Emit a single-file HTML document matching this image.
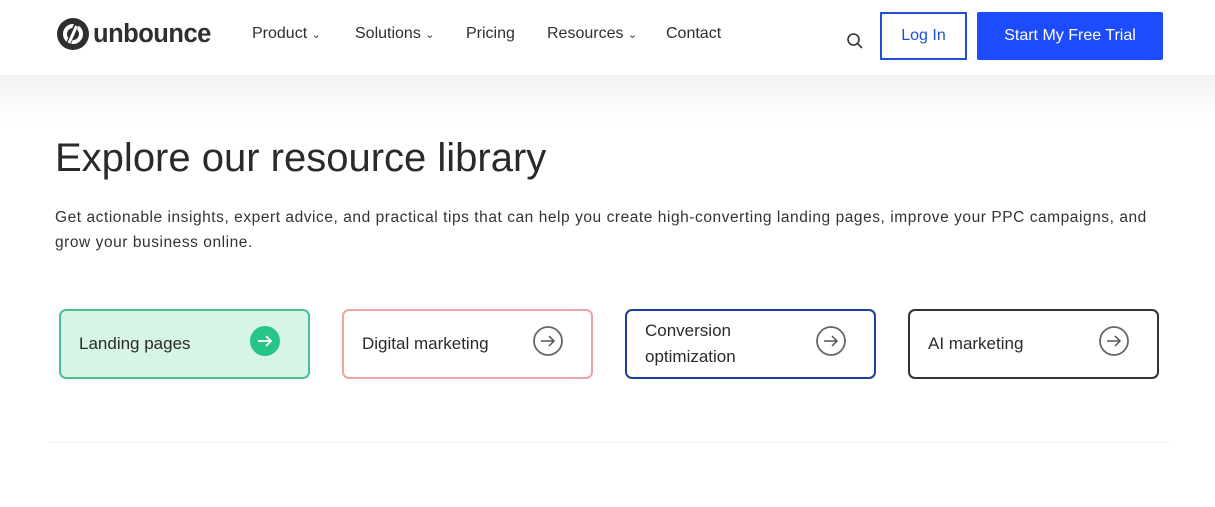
<!DOCTYPE html>
<html><head><style>
*{margin:0;padding:0;box-sizing:border-box}
body{width:1215px;height:507px;background:#fff;font-family:"Liberation Sans",sans-serif;color:#2a2a2a;position:relative;overflow:hidden}
.hdr{position:absolute;left:0;top:0;width:1215px;height:75px;background:#fff}
.shade{position:absolute;left:0;top:75px;width:1215px;height:50px;background:linear-gradient(#f3f3f3,#fff)}
.logo{position:absolute;left:57px;top:18px;display:flex;align-items:center}
.logo span{font-size:25.5px;font-weight:bold;color:#2f2f2f;margin-left:4px;letter-spacing:-0.5px}
.nav{position:absolute;top:25px;font-size:16px;color:#2f2f2f}
.nav small{font-size:11px}
.login{position:absolute;left:880px;top:12px;width:87px;height:48px;border:2px solid #1f4fd8;color:#1f4fd8;font-size:16px;display:flex;align-items:center;justify-content:center}
.trial{position:absolute;left:977px;top:12px;width:186px;height:48px;background:#1d4cff;color:#fff;font-size:16px;display:flex;align-items:center;justify-content:center;border-radius:2px}
h1{position:absolute;left:55px;top:136px;font-size:40px;font-weight:normal;color:#2a2a2a}
p{position:absolute;left:55px;top:205px;width:1100px;font-size:15.5px;letter-spacing:0.55px;line-height:25px;color:#333}
.card{position:absolute;top:309px;width:251px;height:70px;border:2px solid;border-radius:7px;font-size:17px;display:flex;align-items:center;padding-left:18px;line-height:26px}
.card svg{position:absolute;right:27px;top:14px}
.rule{position:absolute;left:48px;top:442px;width:1121px;height:1px;background:#eef3f5}
</style></head><body>
<div class="shade"></div>
<div class="hdr">
<div class="logo"><svg width="32" height="32" viewBox="0 0 32 32"><circle cx="16" cy="16" r="16" fill="#2f2f2f"/><circle cx="16" cy="16" r="8" fill="none" stroke="#fff" stroke-width="4"/><path d="M20 5L11 27" stroke="#2f2f2f" stroke-width="5"/><path d="M19.5 8L12 25" stroke="#fff" stroke-width="3"/></svg><span>unbounce</span></div>
<div class="nav" style="left:252px">Product <small>⌄</small></div>
<div class="nav" style="left:355px">Solutions <small>⌄</small></div>
<div class="nav" style="left:466px">Pricing</div>
<div class="nav" style="left:547px">Resources <small>⌄</small></div>
<div class="nav" style="left:666px">Contact</div>
<svg style="position:absolute;left:846px;top:32px" width="18" height="18" viewBox="0 0 18 18"><circle cx="7.5" cy="7.5" r="5.5" fill="none" stroke="#333" stroke-width="1.6"/><path d="M11.5 11.5L16 16" stroke="#333" stroke-width="1.6"/></svg>
<div class="login">Log In</div>
<div class="trial">Start My Free Trial</div>
</div>
<h1>Explore our resource library</h1>
<p>Get actionable insights, expert advice, and practical tips that can help you create high-converting landing pages, improve your PPC campaigns, and grow your business online.</p>
<div class="card" style="left:59px;border-color:#4cc190;background:#d6f5e7">Landing pages<svg width="32" height="32" viewBox="0 0 32 32"><circle cx="16" cy="16" r="15" fill="#27c488"/><path d="M9 16h13M17 11l5 5-5 5" stroke="#fff" stroke-width="1.8" fill="none"/></svg></div>
<div class="card" style="left:342px;border-color:#eca4a6">Digital marketing<svg width="32" height="32" viewBox="0 0 32 32"><circle cx="16" cy="16" r="14" fill="none" stroke="#666" stroke-width="1.8"/><path d="M9 16h13M17 11l5 5-5 5" stroke="#555" stroke-width="1.5" fill="none"/></svg></div>
<div class="card" style="left:625px;border-color:#1c3f9e">Conversion<br>optimization<svg width="32" height="32" viewBox="0 0 32 32"><circle cx="16" cy="16" r="14" fill="none" stroke="#666" stroke-width="1.8"/><path d="M9 16h13M17 11l5 5-5 5" stroke="#555" stroke-width="1.5" fill="none"/></svg></div>
<div class="card" style="left:908px;border-color:#333">AI marketing<svg width="32" height="32" viewBox="0 0 32 32"><circle cx="16" cy="16" r="14" fill="none" stroke="#666" stroke-width="1.8"/><path d="M9 16h13M17 11l5 5-5 5" stroke="#555" stroke-width="1.5" fill="none"/></svg></div>
<div class="rule"></div>
</body></html>
